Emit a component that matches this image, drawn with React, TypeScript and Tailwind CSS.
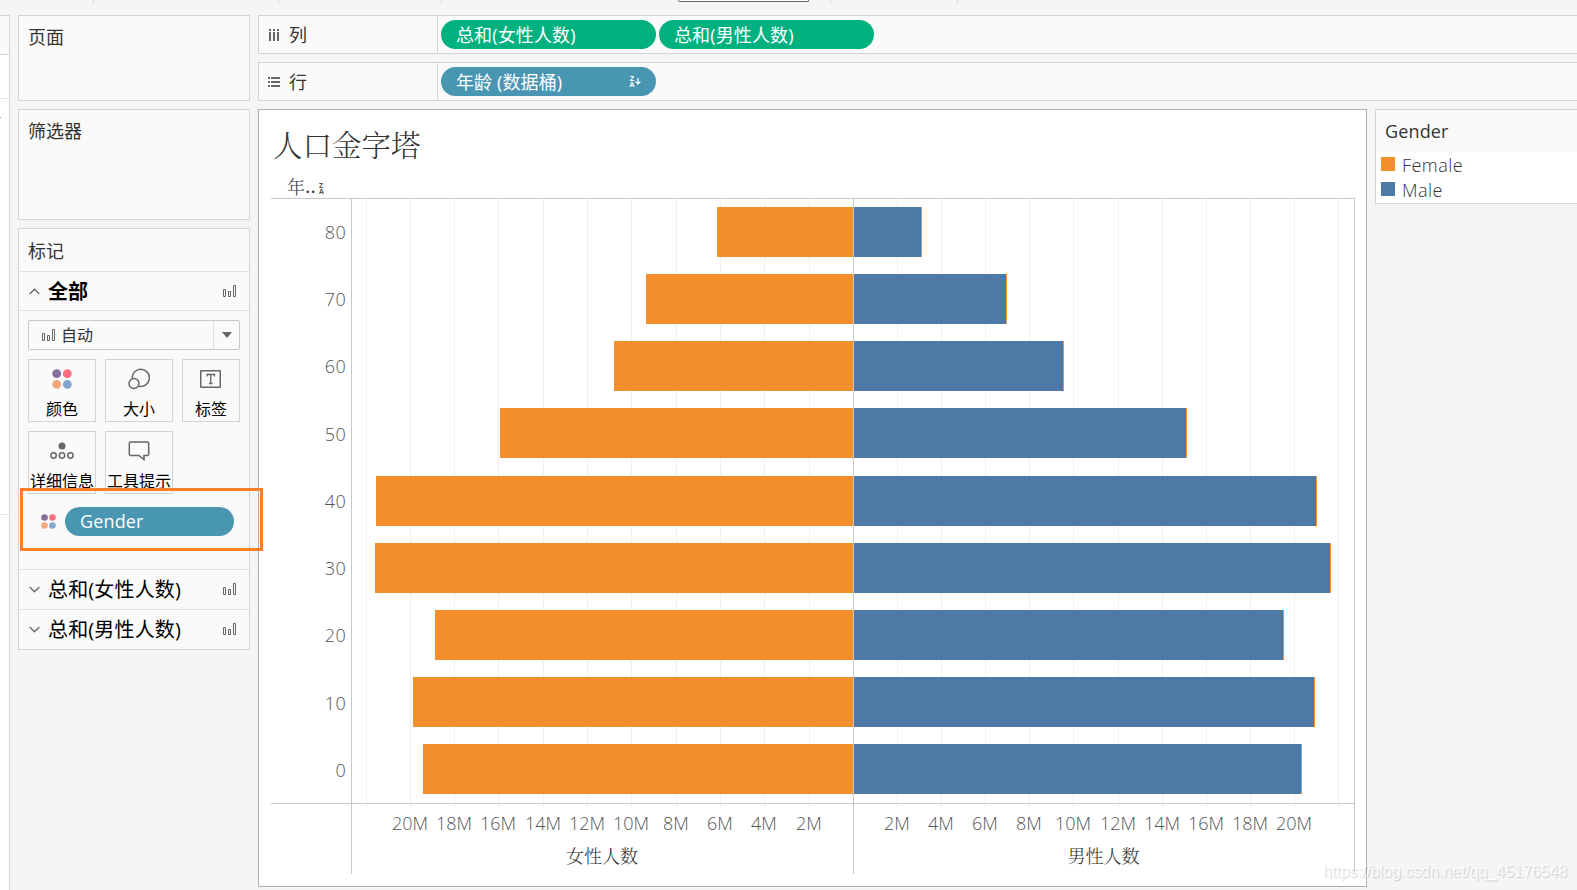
import React from 'react';

const FONT = "font-['Open_Sans','Noto_Sans_CJK_SC',sans-serif]";

const bars = [
  { age: '80', top: 207, left: 717, right: 922, base: 239 },
  { age: '70', top: 274, left: 646, right: 1007, base: 306 },
  { age: '60', top: 341, left: 614, right: 1064, base: 373 },
  { age: '50', top: 408, left: 500, right: 1187, base: 441 },
  { age: '40', top: 476, left: 376, right: 1317, base: 508 },
  { age: '30', top: 543, left: 375, right: 1331, base: 575 },
  { age: '20', top: 610, left: 435, right: 1284, base: 642 },
  { age: '10', top: 677, left: 413, right: 1315, base: 710 },
  { age: '0', top: 744, left: 423, right: 1302, base: 777 },
];

const leftTicks = [366, 410, 454, 498, 543, 587, 631, 676, 720, 764, 809];
const rightTicks = [1338, 1294, 1250, 1206, 1162, 1118, 1073, 1029, 985, 941, 897];
const tickLabels = ['', '20M', '18M', '16M', '14M', '12M', '10M', '8M', '6M', '4M', '2M'];

function BarsIcon() {
  return (
    <svg width="14" height="13" viewBox="0 0 14 13" fill="none" stroke="#666" className="shrink-0">
      <path d="M.5 4.5h2v7h-2zM5.5 6.5h2v5h-2zM10.500 .5h2v11h-2z" />
    </svg>
  );
}

function DotsIcon({ size }: { size: number }) {
  return (
    <svg width={size} height={size} viewBox="0 0 20 20" className="shrink-0">
      <circle cx="4.700" cy="4.700" r="4.400" fill="#86709b" />
      <circle cx="15.300" cy="4.700" r="4.400" fill="#fb6f80" />
      <circle cx="4.700" cy="15.300" r="4.400" fill="#f4a77c" />
      <circle cx="15.300" cy="15.300" r="4.400" fill="#82a6cd" />
    </svg>
  );
}

function SizeIcon() {
  return (
    <svg width="22" height="22" viewBox="0 0 22 22" fill="none" stroke="#666" strokeWidth="1.500">
      <path d="M4.200 10.200A8.600 8.600 0 1 1 11 18.200" />
      <circle cx="6" cy="15.500" r="5" />
    </svg>
  );
}

function LabelIcon() {
  return (
    <svg width="21" height="18" viewBox="0 0 21 18">
      <rect x=".75" y=".75" width="19.500" height="16.500" rx=".5" fill="none" stroke="#666" strokeWidth="1.500" />
      <path d="M7 6.500V4.500h7.500v2M10.750 4.500v9M9 13.500h3.500" fill="none" stroke="#666" strokeWidth="1.300" />
    </svg>
  );
}

function DetailIcon() {
  return (
    <svg width="24" height="18" viewBox="0 0 24 18" fill="none" stroke="#666" strokeWidth="1.500">
      <circle cx="12" cy="4" r="3.500" fill="#666" stroke="none" />
      <circle cx="3.600" cy="13.500" r="2.700" />
      <circle cx="12" cy="13.500" r="2.700" />
      <circle cx="20.400" cy="13.500" r="2.700" />
    </svg>
  );
}

function TooltipIcon() {
  return (
    <svg width="22" height="20" viewBox="0 0 22 20" fill="none" stroke="#666" strokeWidth="1.500">
      <path d="M2.500 1h17a1.200 1.200 0 0 1 1.200 1.200v11a1.200 1.200 0 0 1-1.200 1.200H16v4.200l-5-4.200H2.500a1.200 1.200 0 0 1-1.200-1.200v-11A1.200 1.200 0 0 1 2.500 1z" />
    </svg>
  );
}

function Chevron({ up }: { up?: boolean }) {
  return (
    <svg width="11" height="7" viewBox="0 0 11 7" fill="none" stroke="#666" strokeWidth="1.300" className="shrink-0">
      <path d={up ? 'M.7 6L5.500 1.200L10.300 6' : 'M.7 1L5.500 5.800L10.300 1'} />
    </svg>
  );
}

function MarkButton({ label, wide, children }: { label: string; wide: boolean; children: React.ReactNode }) {
  return (
    <div className={`flex h-[63px] flex-col items-center border border-[#d4d4d4] ${wide ? 'w-[68px]' : 'w-[58px]'}`}>
      <div className="flex h-[38px] items-center justify-center pr-px">{children}</div>
      <div className="text-[16px] leading-[24px] whitespace-nowrap text-black">{label}</div>
    </div>
  );
}

function MarkRow({ label }: { label: string }) {
  return (
    <div className="flex h-10 items-center border-t border-[#e3e3e3] pr-[12px] pl-[10px]">
      <Chevron />
      <span className="ml-[8px] flex-1 pt-px text-[20px] leading-[30px] tracking-[0.15px] text-black">{label}</span>
      <BarsIcon />
    </div>
  );
}

function Pill({ label, color, children }: { label: string; color: string; children?: React.ReactNode }) {
  return (
    <div className={`flex h-[29px] w-[215px] items-center rounded-full pr-[15px] pl-[15px] text-[18px] leading-[27px] text-white ${color}`}>
      <span className="flex-1 pt-px tracking-[0.12px] whitespace-pre">{label}</span>
      {children}
    </div>
  );
}

function Shelf({ icon, label, children }: { icon: React.ReactNode; label: string; children: React.ReactNode }) {
  return (
    <div className="flex h-[39px] border border-r-0 border-[#d4d4d4] bg-[#fafafa]">
      <div className="flex w-[179px] items-center border-r border-[#d4d4d4] pl-[9px]">
        <span className="flex w-[21px]">{icon}</span>
        <span className="pt-[2px] text-[18px] leading-[27px] text-[#333]">{label}</span>
      </div>
      <div className="flex items-start gap-[3px] pt-1 pl-[3px]">{children}</div>
    </div>
  );
}

function Chart() {
  return (
    <svg width="1084" height="680" viewBox="271 198 1084 680" shapeRendering="crispEdges" className="block">
      {[...leftTicks, ...rightTicks].map((x) => (
        <rect key={x} x={x} y="199" width="1" height="609" fill="#f0f0f0" />
      ))}
      {bars.map((b) => (
        <g key={b.age}>
          <rect x={b.left} y={b.top} width={853 - b.left} height="50" fill="#f28e2b" />
          <rect x="854" y={b.top} width={b.right - 854} height="50" fill="#f28e2b" />
          <rect x="854" y={b.top} width={b.right - 855} height="50" fill="#4e79a7" />
        </g>
      ))}
      <g fill="#c8c8c8">
        <rect x="271" y="198" width="1084" height="1" />
        <rect x="271" y="803" width="1084" height="1" />
        <rect x="351" y="198" width="1" height="676" />
        <rect x="853" y="198" width="1" height="676" />
        <rect x="1354" y="198" width="1" height="676" />
      </g>
      <g fill="#555" fontSize="18" fontWeight="300" fontFamily="'Open Sans', sans-serif">
        {bars.map((b) => (
          <text key={b.age} x="346" y={b.base} textAnchor="end" letterSpacing=".3">{b.age}</text>
        ))}
        {tickLabels.map((t, i) => (
          <g key={i} textAnchor="middle">
            <text x={leftTicks[i]} y="830">{t}</text>
            <text x={rightTicks[i]} y="830">{t}</text>
          </g>
        ))}
      </g>
      <g fill="#333" fontSize="18" fontWeight="300" fontFamily="'Noto Serif CJK SC', 'Noto Sans CJK SC', serif" textAnchor="middle">
        <text x="602" y="862.500">女性人数</text>
        <text x="1103.500" y="862.500">男性人数</text>
      </g>
    </svg>
  );
}

export default function App() {
  return (
    <div className={`relative flex h-[890px] w-[1577px] flex-col overflow-hidden bg-[#f5f5f5] ${FONT}`}>
      <div className="flex h-[15px] shrink-0 items-start">
        <div className="ml-[93px] h-[3px] w-px bg-[#d4d4d4]" />
        <div className="ml-[184px] h-[3px] w-px bg-[#d4d4d4]" />
        <div className="ml-[162px] h-[3px] w-px bg-[#d4d4d4]" />
        <div className="ml-[236px] h-[2px] w-[131px] rounded-b-[2px] border border-t-0 border-[#666] bg-white" />
        <div className="ml-[21px] h-[3px] w-px bg-[#d4d4d4]" />
        <div className="ml-[126px] h-[3px] w-px bg-[#d4d4d4]" />
      </div>

      <div className="flex min-h-0 flex-1">
        <div className="flex w-[10px] shrink-0 flex-col border-t border-r border-[#d4d4d4] bg-white">
          <div className="h-[39px] border-b border-[#d4d4d4] bg-[#fafafa]" />
          <div className="h-11 border-b border-[#e3e3e3]" />
          <div className="mt-[18px] h-px w-px bg-[#999]" />
          <div className="mt-[396px] h-px bg-[#e3e3e3]" />
        </div>

        <div className="ml-2 flex w-[232px] shrink-0 flex-col gap-2 text-[18px] leading-[27px] text-[#333]">
          <div className="h-[86px] border border-[#d4d4d4] bg-[#fafafa] pt-[8px] pl-[9px]">页面</div>
          <div className="h-[111px] border border-[#d4d4d4] bg-[#fafafa] pt-[8px] pl-[9px]">筛选器</div>
          <div className="h-[422px] border border-[#d4d4d4] bg-[#fafafa]">
            <div className="h-[43px] border-b border-[#e3e3e3] pt-[9px] pl-[9px]">标记</div>
            <div className="flex h-[39px] items-center border-b border-[#e3e3e3] pr-[12px] pl-[10px]">
              <Chevron up />
              <span className="ml-[8px] flex-1 pt-[2px] text-[20px] leading-[30px] font-bold text-black">全部</span>
              <BarsIcon />
            </div>
            <div className="flex h-[258px] flex-col px-[9px] pt-[9px]">
              <div className="flex h-[30px] shrink-0 rounded-[2px] border border-[#c8c8c8]">
                <div className="flex flex-1 items-center pl-[13px] text-[16px] leading-[24px] text-[#333]">
                  <BarsIcon />
                  <span className="ml-[5px]">自动</span>
                </div>
                <div className="flex w-[26px] items-center justify-center border-l border-[#e0e0e0]">
                  <svg width="10" height="6" viewBox="0 0 10 6"><path d="M0 0h10L5 6z" fill="#666" /></svg>
                </div>
              </div>
              <div className="mt-[9px] flex gap-[9px]">
                <MarkButton label="颜色" wide><DotsIcon size={20} /></MarkButton>
                <MarkButton label="大小" wide><SizeIcon /></MarkButton>
                <MarkButton label="标签" wide={false}><LabelIcon /></MarkButton>
              </div>
              <div className="mt-[9px] flex gap-[9px]">
                <MarkButton label="详细信息" wide><DetailIcon /></MarkButton>
                <MarkButton label="工具提示" wide><TooltipIcon /></MarkButton>
              </div>
              <div className="mt-[13px] flex h-[29px] items-center pl-[13px]">
                <DotsIcon size={15} />
                <div className="ml-[9px] h-[29px] w-[169px] shrink-0 rounded-full bg-[#4996b2] pl-[15px] text-[18px] leading-[28px] tracking-[0.15px] text-white">Gender</div>
              </div>
            </div>
            <MarkRow label="总和(女性人数)" />
            <MarkRow label="总和(男性人数)" />
          </div>
        </div>

        <div className="ml-2 flex min-w-0 flex-1 flex-col gap-2">
          <Shelf
            label="列"
            icon={
              <svg width="12" height="12" viewBox="0 0 12 12" fill="#666" shapeRendering="crispEdges">
                <path d="M1 0h2v2H1zM5 0h2v2H5zM9 0h2v2H9zM1 3h2v9H1zM5 3h2v9H5zM9 3h2v9H9z" />
              </svg>
            }
          >
            <Pill label="总和(女性人数)" color="bg-[#00b180]" />
            <Pill label="总和(男性人数)" color="bg-[#00b180]" />
          </Shelf>
          <Shelf
            label="行"
            icon={
              <svg width="12" height="10" viewBox="0 0 12 10" fill="#666" shapeRendering="crispEdges">
                <path d="M0 0h2v2H0zM3 0h9v2H3zM0 4h2v2H0zM3 4h9v2H3zM0 8h2v2H0zM3 8h9v2H3z" />
              </svg>
            }
          >
            <Pill label="年龄 (数据桶)" color="bg-[#4996b2]">
              <span className="flex items-center">
                <span className="flex w-[6px] flex-col text-center text-[7px] leading-[6px] font-bold">
                  <span>Z</span>
                  <span>A</span>
                </span>
                <svg width="6" height="7" viewBox="0 0 6 7" fill="none" stroke="#fff" strokeWidth="1.200">
                  <path d="M3 0v6M.6 3.600L3 6l2.400-2.400" />
                </svg>
              </span>
            </Pill>
          </Shelf>

          <div className="flex items-start">
            <div className="h-[778px] w-[1109px] shrink-0 border border-[#b0b0b0] bg-white pl-3">
              <div className="h-[60px] pt-[11px] pl-[2px] font-['Noto_Serif_CJK_SC','Noto_Sans_CJK_SC',serif] text-[29.5px] leading-[44px] font-light text-[#333]">
                人口金字塔
              </div>
              <div className="flex h-[28px] items-start pl-[16px] text-[#333]">
                <span className="pt-[3px] font-['Noto_Serif_CJK_SC','Noto_Sans_CJK_SC',serif] text-[18px] leading-[27px] font-light">年</span>
                <span className="pt-[4px] text-[20px] leading-[24px] tracking-[0.3px]">..</span>
                <span className="mt-[13px] ml-[3px] flex flex-col text-[7px] leading-[6px] font-bold text-[#555]">
                  <span>Z</span>
                  <span>A</span>
                </span>
              </div>
              <Chart />
            </div>
            <div className="ml-2 h-[95px] flex-1 border border-r-0 border-[#d4d4d4] bg-white text-[18px]">
              <div className="h-[42px] bg-[#fafafa] pt-[8px] pl-[9px] leading-[27px] tracking-[0.15px] text-[#333]">Gender</div>
              <div className="flex h-[25px] items-start pt-[5px] pl-[5px] font-light tracking-[0.45px] text-[#333]">
                <span className="h-[14px] w-[14px] bg-[#f28e2b]" />
                <span className="-mt-[5px] ml-[7px] leading-[27px]">Female</span>
              </div>
              <div className="flex h-[25px] items-start pt-[5px] pl-[5px] font-light tracking-[0.45px] text-[#333]">
                <span className="h-[14px] w-[14px] bg-[#4e79a7]" />
                <span className="-mt-[5px] ml-[7px] leading-[27px]">Male</span>
              </div>
            </div>
          </div>
        </div>
      </div>

      <div className="absolute top-[488px] left-[20px] h-[63px] w-[243px] border-[3px] border-[#ff7f27]" />
      <div className="absolute top-[861px] left-[1323px] font-['Liberation_Sans',sans-serif] text-[16px] leading-[22px] tracking-[-0.04px] whitespace-nowrap text-white/80 [text-shadow:1px_1px_1px_rgba(0,0,0,0.18)]">
        https://blog.csdn.net/qq_45176548
      </div>
    </div>
  );
}
